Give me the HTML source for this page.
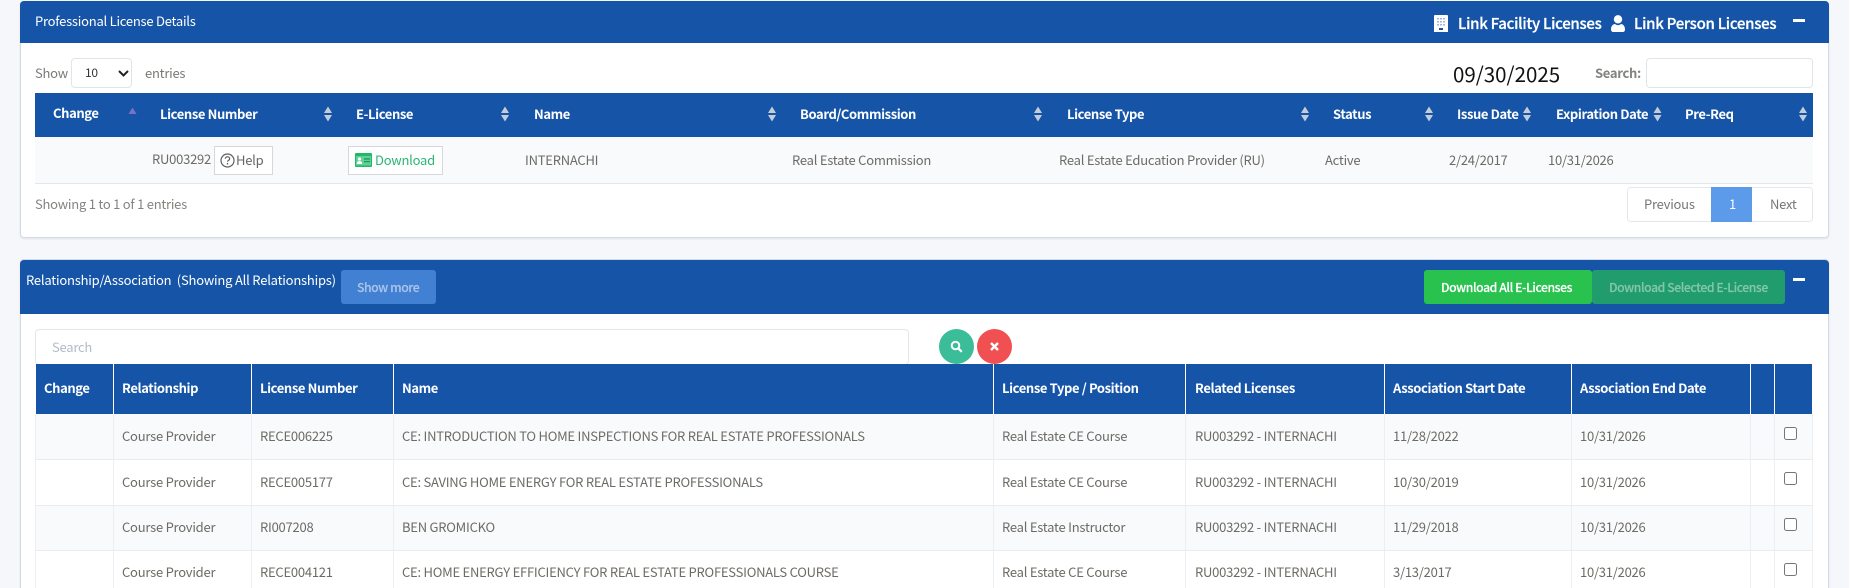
<!DOCTYPE html>
<html><head><meta charset="utf-8"><style>
*{box-sizing:border-box}
html,body{margin:0;padding:0;width:1849px;height:588px;overflow:hidden;background:#f5f7fb}
body{font-family:"Noto Sans CJK JP","Liberation Sans",sans-serif;font-size:13px;letter-spacing:-.24px;color:#6e6b66;position:relative}
.a{position:absolute}
.t{position:absolute;white-space:nowrap;height:20px;line-height:20px}
.h{color:#fff;font-weight:700;font-size:13px;letter-spacing:-.39px}
.btn{color:#fff;font-weight:500;font-size:12.2px;letter-spacing:-.42px;-webkit-text-stroke:.15px currentColor}
.lk{color:#fff;font-weight:500;font-size:15px;letter-spacing:-.28px;-webkit-text-stroke:.25px #fff}
.panel{position:absolute;background:#fff;border:1px solid #cfdbe8;border-radius:4px;box-shadow:0 1px 2px rgba(0,0,0,.08)}
.bar{position:absolute;background:#1554a7}
.v{position:absolute;width:1px;background:#eceef2}
.vh{position:absolute;width:1px;background:#fff;top:364px;height:50px}
.hl{position:absolute;left:35px;width:1777px;height:1px;background:#e9ebef}
.cb{position:absolute;left:1784px;width:13px;height:13px;border:1px solid #767676;border-radius:2.5px;background:#fff}
</style></head><body>

<div class="panel" style="left:20px;top:1px;width:1809px;height:237px"></div>
<div class="bar" style="left:20px;top:1px;width:1809px;height:42px;border-radius:4px 4px 0 0"></div>
<div class="t" style="left:35px;top:11px;color:#fff">Professional License Details</div>

<svg class="a" style="left:1434px;top:15px" width="14" height="17" viewBox="0 0 14 17"><path fill="#fff" d="M0 1a1 1 0 0 1 1-1h12a1 1 0 0 1 1 1v16H0z"/><path fill="#9db9dc" d="M3 3h2v1.500H3zM6 3h2v1.500H6zM9 3h2v1.500H9zM3 6h2v1.500H3zM6 6h2v1.500H6zM9 6h2v1.500H9zM3 9h2v1.500H3zM6 9h2v1.500H6zM9 9h2v1.500H9z"/><path fill="#1554a7" d="M5 13h4v2H5z"/></svg>
<div class="t lk" style="left:1458px;top:14px">Link Facility Licenses</div>
<svg class="a" style="left:1611px;top:15px" width="14" height="17" viewBox="0 0 14 17"><circle cx="7" cy="4.300" r="4.200" fill="#fff"/><path fill="#fff" d="M0 14.500C0 11 2 9 4 9c1 .8 2 1.200 3 1.200S9 9.800 10 9c2 0 4 2 4 5.500 0 1.500-1 2.500-2.200 2.500H2.200C1 17 0 16 0 14.500z"/></svg>
<div class="t lk" style="left:1634px;top:14px">Link Person Licenses</div>
<div class="a" style="left:1793px;top:19px;width:12px;height:3px;background:#fff"></div>

<div class="t" style="left:35px;top:63px;color:#7c7a76">Show</div>
<div class="a" style="left:71px;top:58px;width:61px;height:30px;border:1px solid #dfe6ea;border-radius:4px;background:#fff"></div>
<div class="t" style="left:85px;top:63px;font-size:12px;color:#333">10</div>
<svg class="a" style="left:118px;top:70px" width="11" height="7" viewBox="0 0 11 7"><path d="M1 1l4.500 4.500L10 1" fill="none" stroke="#222" stroke-width="2"/></svg>
<div class="t" style="left:145px;top:63px;color:#7c7a76">entries</div>
<div class="t" style="left:1453px;top:61px;height:24px;line-height:24px;color:#111;font-size:20.500px;letter-spacing:0">09/30/2025</div>
<div class="t" style="left:1595px;top:63px;font-weight:700;font-size:13px;color:#85837f;letter-spacing:-.3px">Search:</div>
<div class="a" style="left:1646px;top:58px;width:167px;height:30px;border:1px solid #dfe6ea;border-radius:4px;background:#fff"></div>

<div class="bar" style="left:35px;top:93px;width:1778px;height:44px"></div>
<div class="t h" style="left:53px;top:103px">Change</div>
<div class="t h" style="left:160px;top:104px">License Number</div>
<div class="t h" style="left:356px;top:104px">E-License</div>
<div class="t h" style="left:534px;top:104px">Name</div>
<div class="t h" style="left:800px;top:104px">Board/Commission</div>
<div class="t h" style="left:1067px;top:104px">License Type</div>
<div class="t h" style="left:1333px;top:104px">Status</div>
<div class="t h" style="left:1457px;top:104px">Issue Date</div>
<div class="t h" style="left:1556px;top:104px">Expiration Date</div>
<div class="t h" style="left:1685px;top:104px">Pre-Req</div>

<svg class="a" style="left:0;top:0" width="1849" height="140"><path fill="#7a70c8" d="M128.500 114l4-6.500 4 6.500z"/>
<g fill="#c4ccd8"><path d="M324 113l4-6.500 4 6.500zM324 115l4 6.500 4-6.500zM501 113l4-6.500 4 6.500zM501 115l4 6.500 4-6.500zM768 113l4-6.500 4 6.500zM768 115l4 6.500 4-6.500zM1034 113l4-6.500 4 6.500zM1034 115l4 6.500 4-6.500zM1301 113l4-6.500 4 6.500zM1301 115l4 6.500 4-6.500zM1425 113l4-6.500 4 6.500zM1425 115l4 6.500 4-6.500zM1523 113l4-6.500 4 6.500zM1523 115l4 6.500 4-6.500zM1653.500 113l4-6.500 4 6.500zM1653.500 115l4 6.500 4-6.500zM1799 113l4-6.500 4 6.500zM1799 115l4 6.500 4-6.500z"/></g></svg>

<div class="a" style="left:35px;top:137px;width:1778px;height:47px;background:#f9fafc;border-bottom:1px solid #e3e6ea"></div>
<div class="t" style="left:152px;top:149px">RU003292</div>
<div class="a" style="left:214px;top:146px;width:59px;height:29px;border:1px solid #d6d8db;background:#fff"></div>
<svg class="a" style="left:220px;top:153px" width="15" height="15" viewBox="0 0 15 15"><circle cx="7.500" cy="7.500" r="6.500" fill="none" stroke="#5e5e5e" stroke-width="1.200"/><path d="M5.300 5.800c0-1.300 1-2 2.200-2s2.200.8 2.200 1.900c0 1.500-2.200 1.500-2.200 3" fill="none" stroke="#5e5e5e" stroke-width="1.200"/><rect x="6.800" y="10" width="1.400" height="1.400" fill="#5e5e5e"/></svg>
<div class="t" style="left:236px;top:150px;color:#666">Help</div>
<div class="a" style="left:348px;top:146px;width:95px;height:29px;border:1px solid #d6d8db;background:#fff"></div>
<svg class="a" style="left:355px;top:153px" width="17" height="14" viewBox="0 0 17 14"><rect width="17" height="14" rx="1" fill="#22b866"/><rect x="1" y="3" width="15" height="9.500" fill="#5fd097"/><circle cx="4.500" cy="6" r="1.600" fill="#fff"/><path d="M1.800 11c0-2 1.200-3 2.700-3s2.700 1 2.700 3z" fill="#fff"/><path d="M9 5.300h6v1.300H9zM9 8h6v1.300H9z" fill="#1a9c55"/></svg>
<div class="t" style="left:375px;top:150px;color:#2bb673">Download</div>
<div class="t" style="left:525px;top:150px">INTERNACHI</div>
<div class="t" style="left:792px;top:150px">Real Estate Commission</div>
<div class="t" style="left:1059px;top:150px">Real Estate Education Provider (RU)</div>
<div class="t" style="left:1325px;top:150px">Active</div>
<div class="t" style="left:1449px;top:150px">2/24/2017</div>
<div class="t" style="left:1548px;top:150px">10/31/2026</div>

<div class="t" style="left:35px;top:194px;color:#85837f">Showing 1 to 1 of 1 entries</div>
<div class="a" style="left:1627px;top:187px;width:186px;height:35px;border:1px solid #e4e8ee;border-radius:4px;background:#fff"></div>
<div class="a" style="left:1711px;top:187px;width:41px;height:35px;background:#5c9aea"></div>
<div class="t" style="left:1644px;top:194px;color:#77757a">Previous</div>
<div class="t" style="left:1729px;top:194px;color:#fff">1</div>
<div class="t" style="left:1770px;top:194px;color:#77757a">Next</div>

<div class="panel" style="left:20px;top:259px;width:1809px;height:340px"></div>
<div class="bar" style="left:20px;top:260px;width:1809px;height:54px;border-radius:4px 4px 0 0"></div>
<div class="t" style="left:26px;top:270px;color:#fff;letter-spacing:-.21px">Relationship/Association&nbsp; (Showing All Relationships)</div>
<div class="a" style="left:341px;top:270px;width:95px;height:34px;background:#4280d4;border-radius:3px"></div>
<div class="t btn" style="left:357px;top:277px;color:#a9c4e8">Show more</div>
<div class="a" style="left:1424px;top:270px;width:168px;height:34px;background:#29c24e;border-radius:3px"></div>
<div class="t btn" style="left:1441px;top:277px">Download All E-Licenses</div>
<div class="a" style="left:1592px;top:270px;width:193px;height:34px;background:#219c6d;border-radius:3px"></div>
<div class="t btn" style="left:1609px;top:277px;color:#83c6ad">Download Selected E-License</div>
<div class="a" style="left:1793px;top:278px;width:12px;height:3px;background:#fff"></div>

<div class="a" style="left:35px;top:329px;width:874px;height:36px;border:1px solid #e3e8ec;border-radius:4px;background:#fff"></div>
<div class="t" style="left:52px;top:337px;color:#b3bbc6">Search</div>
<div class="a" style="left:939px;top:329px;width:35px;height:35px;border-radius:50%;background:#3abd98"></div>
<svg class="a" style="left:950px;top:340px" width="13" height="13" viewBox="0 0 13 13"><circle cx="5.500" cy="5.500" r="3.800" fill="none" stroke="#fff" stroke-width="2"/><path d="M8.300 8.300l3.500 3.500" stroke="#fff" stroke-width="2.200"/></svg>
<div class="a" style="left:977px;top:329px;width:35px;height:35px;border-radius:50%;background:#f15052"></div>
<svg class="a" style="left:990px;top:342px" width="9" height="9" viewBox="0 0 9 9"><path d="M1 1l7 7M8 1l-7 7" stroke="#fff" stroke-width="2.400"/></svg>

<div class="bar" style="left:36px;top:364px;width:1776px;height:50px"></div>
<div class="vh" style="left:113px"></div><div class="vh" style="left:251px"></div><div class="vh" style="left:393px"></div><div class="vh" style="left:993px"></div><div class="vh" style="left:1185px"></div><div class="vh" style="left:1384px"></div><div class="vh" style="left:1571px"></div><div class="vh" style="left:1750px"></div><div class="vh" style="left:1774px"></div>
<div class="t h" style="left:44px;top:378px">Change</div>
<div class="t h" style="left:122px;top:378px">Relationship</div>
<div class="t h" style="left:260px;top:378px">License Number</div>
<div class="t h" style="left:402px;top:378px">Name</div>
<div class="t h" style="left:1002px;top:378px">License Type / Position</div>
<div class="t h" style="left:1195px;top:378px">Related Licenses</div>
<div class="t h" style="left:1393px;top:378px">Association Start Date</div>
<div class="t h" style="left:1580px;top:378px">Association End Date</div>

<div class="a" style="left:36px;top:414px;width:1776px;height:45px;background:#f9fafc"></div>
<div class="a" style="left:36px;top:505px;width:1776px;height:46px;background:#f9fafc"></div>
<div class="hl" style="top:459px"></div><div class="hl" style="top:505px"></div><div class="hl" style="top:550px"></div>
<div class="v" style="left:35px;top:414px;height:174px"></div><div class="v" style="left:113px;top:414px;height:174px"></div><div class="v" style="left:251px;top:414px;height:174px"></div><div class="v" style="left:393px;top:414px;height:174px"></div><div class="v" style="left:993px;top:414px;height:174px"></div><div class="v" style="left:1185px;top:414px;height:174px"></div><div class="v" style="left:1384px;top:414px;height:174px"></div><div class="v" style="left:1571px;top:414px;height:174px"></div><div class="v" style="left:1750px;top:414px;height:174px"></div><div class="v" style="left:1774px;top:414px;height:174px"></div><div class="v" style="left:1812px;top:414px;height:174px"></div>

<div class="t" style="left:122px;top:426px">Course Provider</div>
<div class="t" style="left:260px;top:426px">RECE006225</div>
<div class="t" style="left:402px;top:426px">CE: INTRODUCTION TO HOME INSPECTIONS FOR REAL ESTATE PROFESSIONALS</div>
<div class="t" style="left:1002px;top:426px">Real Estate CE Course</div>
<div class="t" style="left:1195px;top:426px">RU003292 - INTERNACHI</div>
<div class="t" style="left:1393px;top:426px">11/28/2022</div>
<div class="t" style="left:1580px;top:426px">10/31/2026</div>
<div class="cb" style="top:427px"></div>

<div class="t" style="left:122px;top:472px">Course Provider</div>
<div class="t" style="left:260px;top:472px">RECE005177</div>
<div class="t" style="left:402px;top:472px">CE: SAVING HOME ENERGY FOR REAL ESTATE PROFESSIONALS</div>
<div class="t" style="left:1002px;top:472px">Real Estate CE Course</div>
<div class="t" style="left:1195px;top:472px">RU003292 - INTERNACHI</div>
<div class="t" style="left:1393px;top:472px">10/30/2019</div>
<div class="t" style="left:1580px;top:472px">10/31/2026</div>
<div class="cb" style="top:472px"></div>

<div class="t" style="left:122px;top:517px">Course Provider</div>
<div class="t" style="left:260px;top:517px">RI007208</div>
<div class="t" style="left:402px;top:517px">BEN GROMICKO</div>
<div class="t" style="left:1002px;top:517px">Real Estate Instructor</div>
<div class="t" style="left:1195px;top:517px">RU003292 - INTERNACHI</div>
<div class="t" style="left:1393px;top:517px">11/29/2018</div>
<div class="t" style="left:1580px;top:517px">10/31/2026</div>
<div class="cb" style="top:518px"></div>

<div class="t" style="left:122px;top:562px">Course Provider</div>
<div class="t" style="left:260px;top:562px">RECE004121</div>
<div class="t" style="left:402px;top:562px">CE: HOME ENERGY EFFICIENCY FOR REAL ESTATE PROFESSIONALS COURSE</div>
<div class="t" style="left:1002px;top:562px">Real Estate CE Course</div>
<div class="t" style="left:1195px;top:562px">RU003292 - INTERNACHI</div>
<div class="t" style="left:1393px;top:562px">3/13/2017</div>
<div class="t" style="left:1580px;top:562px">10/31/2026</div>
<div class="cb" style="top:563px"></div>
</body></html>
